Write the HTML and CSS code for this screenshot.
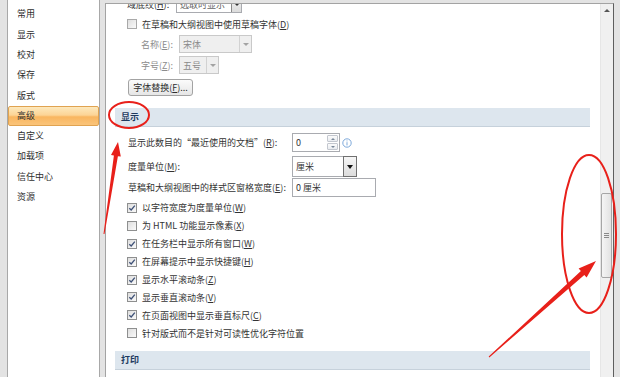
FILE: index.html
```html
<!DOCTYPE html>
<html lang="zh-CN">
<head>
<meta charset="utf-8">
<title>Word 选项 - 高级</title>
<link rel="stylesheet" href="styles.css">
</head>
<body>
<div class="window">
  <ul class="nav">
    <li>常用</li>
    <li>显示</li>
    <li>校对</li>
    <li>保存</li>
    <li>版式</li>
    <li class="active">高级</li>
    <li>自定义</li>
    <li>加载项</li>
    <li>信任中心</li>
    <li>资源</li>
  </ul>
  <div class="panel">
    <div class="content">
      <div class="row r-field">
        <span class="lbl lbl-field">域底纹(<u>H</u>):</span>
        <span class="combo combo-field"><span class="val">选取时显示</span><span class="btn-arr"><span class="tri"></span></span></span>
      </div>
      <div class="row r-check1">
        <span class="box"></span><span>在草稿和大纲视图中使用草稿字体(<u>D</u>)</span>
      </div>
      <div class="row r-sub">
        <span class="lbl lbl-sub dis">名称(<u>E</u>):</span>
        <span class="combo combo-dis combo-name"><span class="val">宋体</span><span class="arr-dis"><span class="tri tri-dis"></span></span></span>
      </div>
      <div class="row r-sub r-sub2">
        <span class="lbl lbl-sub dis">字号(<u>Z</u>):</span>
        <span class="combo combo-dis combo-size"><span class="val">五号</span><span class="arr-dis"><span class="tri tri-dis"></span></span></span>
      </div>
      <div class="row r-btn">
        <span class="button">字体替换(<u>F</u>)...</span>
      </div>

      <div class="band">显示</div>

      <div class="row r-form r1">
        <span class="lbl lbl-form">显示此数目的“最近使用的文档”(<u>R</u>):</span>
        <span class="spin"><span class="val">0</span><span class="spin-btns"><span class="sb"><span class="tri-up"></span></span><span class="sb"><span class="tri tri-sm"></span></span></span></span>
        <svg class="info" width="10" height="10" viewBox="0 0 10 10"><circle cx="5" cy="5" r="4.2" fill="none" stroke="#6f9fd6" stroke-width="0.9"/><rect x="4.55" y="4.2" width="0.9" height="3.2" fill="#6f9fd6"/><rect x="4.55" y="2.5" width="0.9" height="0.9" fill="#6f9fd6"/></svg>
      </div>
      <div class="row r-form r2">
        <span class="lbl lbl-form">度量单位(<u>M</u>):</span>
        <span class="combo combo-unit"><span class="val">厘米</span><span class="btn-arr btn-arr-lg"><span class="tri tri-blk"></span></span></span>
      </div>
      <div class="row r-form r3">
        <span class="lbl lbl-form">草稿和大纲视图中的样式区窗格宽度(<u>E</u>):</span>
        <span class="textbox"><span class="val">0 厘米</span></span>
      </div>

      <div class="checks">
        <div class="row check"><span class="box on"><svg width="8" height="8" viewBox="0 0 8 8"><path d="M1.3 4.2 L3.2 6 L6.8 1.6" fill="none" stroke="#3e5177" stroke-width="1.3"/></svg></span><span>以字符宽度为度量单位(<u>W</u>)</span></div>
        <div class="row check"><span class="box"></span><span>为 HTML 功能显示像素(<u>X</u>)</span></div>
        <div class="row check"><span class="box on"><svg width="8" height="8" viewBox="0 0 8 8"><path d="M1.3 4.2 L3.2 6 L6.8 1.6" fill="none" stroke="#3e5177" stroke-width="1.3"/></svg></span><span>在任务栏中显示所有窗口(<u>W</u>)</span></div>
        <div class="row check"><span class="box on"><svg width="8" height="8" viewBox="0 0 8 8"><path d="M1.3 4.2 L3.2 6 L6.8 1.6" fill="none" stroke="#3e5177" stroke-width="1.3"/></svg></span><span>在屏幕提示中显示快捷键(<u>H</u>)</span></div>
        <div class="row check"><span class="box on"><svg width="8" height="8" viewBox="0 0 8 8"><path d="M1.3 4.2 L3.2 6 L6.8 1.6" fill="none" stroke="#3e5177" stroke-width="1.3"/></svg></span><span>显示水平滚动条(<u>Z</u>)</span></div>
        <div class="row check"><span class="box on"><svg width="8" height="8" viewBox="0 0 8 8"><path d="M1.3 4.2 L3.2 6 L6.8 1.6" fill="none" stroke="#3e5177" stroke-width="1.3"/></svg></span><span>显示垂直滚动条(<u>V</u>)</span></div>
        <div class="row check"><span class="box on"><svg width="8" height="8" viewBox="0 0 8 8"><path d="M1.3 4.2 L3.2 6 L6.8 1.6" fill="none" stroke="#3e5177" stroke-width="1.3"/></svg></span><span>在页面视图中显示垂直标尺(<u>C</u>)</span></div>
        <div class="row check"><span class="box"></span><span>针对版式而不是针对可读性优化字符位置</span></div>
      </div>

      <div class="band band2">打印</div>
    </div>
    <div class="scrollbar">
      <div class="sc-up"><span class="tri-up tri-up-sc"></span></div>
      <div class="thumb"><span class="grip"></span><span class="grip"></span><span class="grip"></span></div>
    </div>
  </div>
</div>

<svg class="annot" width="620" height="377" viewBox="0 0 620 377">
  <ellipse cx="129" cy="115" rx="20" ry="13" fill="none" stroke="#e8201a" stroke-width="2"/>
  <polygon points="104.5,234.1 117.9,156.15 120.8,156.6 118,142 111,155.1 113.9,155.55 103.5,233.9" fill="#e8201a"/>
  <ellipse cx="589" cy="234" rx="27" ry="79" fill="none" stroke="#e8201a" stroke-width="2"/>
  <polygon points="489.3,357.4 584.3,274.9 586.6,277.5 596,261 578.6,268.5 580.9,271.1 488.7,356.6" fill="#e8201a"/>
</svg>
</body>
</html>
```

FILE: styles.css
```css
* { box-sizing: border-box; }

html, body { margin: 0; padding: 0; }

body {
  width: 620px;
  height: 377px;
  overflow: hidden;
  position: relative;
  background: #e3e3e3;
  font-family: "Noto Sans CJK SC", "Noto Sans", sans-serif;
  font-size: 9px;
  color: #333;
}

u { text-decoration: underline; text-underline-offset: 1px; }

.window {
  display: flex;
  height: 377px;
  padding-left: 7px;
  gap: 5px;
}

/* ---------- left navigation ---------- */
.nav {
  list-style: none;
  margin: -6px 0 0;
  padding: 9.35px 0 0;
  width: 93px;
  height: 400px;
  background: #fff;
  border: 1px solid #a8a8a8;
  flex: none;
}

.nav li {
  height: 20.3px;
  line-height: 20px;
  padding-left: 9px;
  color: #2e2e2e;
}

.nav li.active {
  background: linear-gradient(#fde9bd, #fcd496 45%, #f9b660 55%, #fac47a);
  border: 1px solid #e0a351;
  border-radius: 2px;
  padding-left: 8px;
  line-height: 18px;
}

/* ---------- main panel ---------- */
.panel {
  width: 509px;
  height: 380px;
  margin-top: 3px;
  background: #fff;
  border: 1px solid #a3a3a3;
  border-right: 1px solid #5e5e5e;
  display: flex;
  flex: none;
}

.content {
  flex: 1;
  overflow: hidden;
  padding-right: 10px;
}

.row {
  display: flex;
  align-items: center;
  white-space: nowrap;
}

.lbl { flex: none; }
.dis { color: #8c8c8c; }

.r-field { height: 18px; margin-top: -9px; padding-left: 21px; }
.lbl-field { width: 49px; }

.r-check1 { height: 18px; margin-top: 2px; padding-left: 21px; }

.r-sub { height: 18px; margin-top: 2px; padding-left: 35px; }
.r-sub2 { margin-top: 3px; }
.lbl-sub { width: 38px; }

.r-btn { height: 17px; margin-top: 5px; padding-left: 22px; }

.r-form { padding-left: 22px; }
.r1 { height: 19px; margin-top: 6px; }
.r2 { height: 21px; margin-top: 4px; }
.r3 { height: 19px; margin-top: 1px; }
.lbl-form { width: 164px; }

/* ---------- section bands ---------- */
.band {
  margin: 12px 0 0 9px;
  height: 19px;
  line-height: 18px;
  padding-left: 6px;
  background: #dde6ee;
  border-bottom: 1px solid #c6d1db;
  font-weight: bold;
  color: #1e3a5f;
}

.band2 { margin-top: 8.8px; }

/* ---------- checkboxes ---------- */
.checks { margin-top: 2px; }

.check {
  height: 17.9px;
  padding-left: 21px;
}

.box {
  flex: none;
  width: 10px;
  height: 10px;
  margin-right: 5px;
  border: 1px solid #8e8f8f;
  background: linear-gradient(135deg, #dedede, #fafafa);
  display: flex;
  align-items: center;
  justify-content: center;
}

.r-check1 .box { border-color: #a9a9a9; }

/* ---------- inputs ---------- */
.combo {
  display: flex;
  align-items: stretch;
  border: 1px solid #a9abb0;
  background: #fff;
}

.combo .val,
.spin .val,
.textbox .val {
  flex: 1;
  padding-left: 3px;
  display: flex;
  align-items: center;
}

.combo-field { width: 66px; height: 18px; }
.combo-field .val { color: #666; }

.btn-arr {
  flex: none;
  width: 10px;
  border-left: 1px solid #8a8a8a;
  background: linear-gradient(#f6f6f6, #dcdcdc);
  display: flex;
  align-items: center;
  justify-content: center;
}

.btn-arr-lg {
  width: 14px;
  border: 1px solid #707070;
  margin: -1px -1px -1px 0;
}

.combo-dis {
  height: 18px;
  background: #efefef;
  border-color: #c9c9c9;
  color: #8a8a8a;
}

.combo-name { width: 73px; }
.combo-size { width: 40px; }

.arr-dis {
  flex: none;
  width: 12px;
  border-left: 1px solid #d2d2d2;
  display: flex;
  align-items: center;
  justify-content: center;
}

.tri {
  width: 0;
  height: 0;
  border-left: 3px solid transparent;
  border-right: 3px solid transparent;
  border-top: 3px solid #333;
}

.tri-dis { border-top-color: #a3a3a3; }
.tri-blk { border-top-color: #111; border-left-width: 3.5px; border-right-width: 3.5px; border-top-width: 4px; }
.tri-sm { border-left-width: 2px; border-right-width: 2px; border-top: 2px solid #7a8899; }

.tri-up {
  width: 0;
  height: 0;
  border-left: 2px solid transparent;
  border-right: 2px solid transparent;
  border-bottom: 2px solid #7a8899;
}

.combo-unit { width: 65px; height: 21px; }

.spin {
  width: 48px;
  height: 19px;
  display: flex;
  border: 1px solid #a9abb0;
  flex: none;
}

.spin-btns {
  width: 12px;
  display: flex;
  flex-direction: column;
  padding: 1px 1px 1px 0;
  gap: 1px;
}

.sb {
  flex: 1;
  border: 1px solid #c3c7cf;
  border-radius: 1px;
  background: linear-gradient(#fbfbfb, #e9ecf0);
  display: flex;
  align-items: center;
  justify-content: center;
}

.info { margin-left: 2px; flex: none; }

.textbox {
  width: 84px;
  height: 19px;
  display: flex;
  border: 1px solid #a9abb0;
}

.button {
  width: 65px;
  height: 17px;
  border: 1px solid #a3a3a3;
  border-radius: 3px;
  background: linear-gradient(#fbfbfb, #e6e6e6);
  display: flex;
  align-items: center;
  justify-content: center;
  color: #2e2e2e;
}

/* ---------- scrollbar ---------- */
.scrollbar {
  width: 13px;
  flex: none;
  background: #f0f0f0;
  border-left: 1px solid #e6e6e6;
  display: flex;
  flex-direction: column;
}

.sc-up {
  height: 12px;
  display: flex;
  align-items: center;
  justify-content: center;
}

.tri-up-sc {
  border-left-width: 3px;
  border-right-width: 3px;
  border-bottom: 3px solid #555;
}

.thumb {
  margin-top: 177px;
  width: 11px;
  height: 85px;
  border: 1px solid #a6a6a6;
  border-radius: 2px;
  background: linear-gradient(to right, #f5f5f5, #e2e2e2);
  display: flex;
  flex-direction: column;
  align-items: center;
  justify-content: center;
  gap: 1px;
}

.grip {
  width: 5px;
  height: 1px;
  background: #8a8a8a;
}

/* ---------- red annotations ---------- */
.annot {
  position: absolute;
  left: 0;
  top: 0;
  pointer-events: none;
}
```
